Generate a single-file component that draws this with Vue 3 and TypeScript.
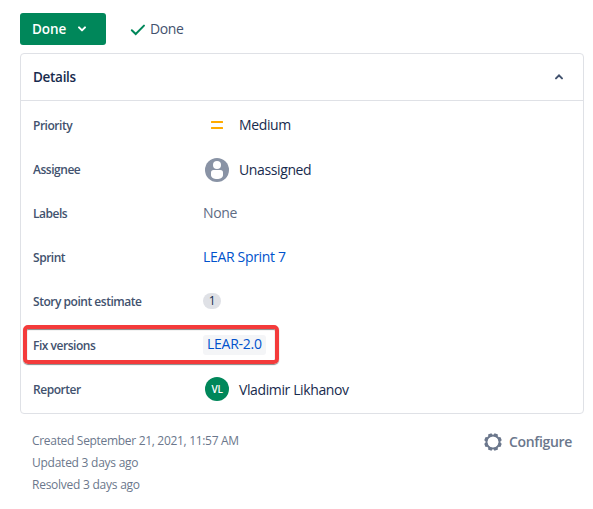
<script setup lang="ts">
interface Field {
  label: string
  value: string
  kind: 'priority' | 'unassigned' | 'none' | 'link' | 'badge' | 'version' | 'user'
}

const fields: Field[] = [
  { label: 'Priority', value: 'Medium', kind: 'priority' },
  { label: 'Assignee', value: 'Unassigned', kind: 'unassigned' },
  { label: 'Labels', value: 'None', kind: 'none' },
  { label: 'Sprint', value: 'LEAR Sprint 7', kind: 'link' },
  { label: 'Story point estimate', value: '1', kind: 'badge' },
  { label: 'Fix versions', value: 'LEAR-2.0', kind: 'version' },
  { label: 'Reporter', value: 'Vladimir Likhanov', kind: 'user' },
]
</script>

<template>
  <main class="panel">
    <div class="status">
      <button class="status-button" type="button">
        <span>Done</span>
        <svg width="10" height="8" viewBox="0 0 10 8"><path d="M2 2.4 5 5.4 8 2.4" /></svg>
      </button>
      <svg class="check" width="16" height="14" viewBox="0 0 16 14"><path d="M1.8 7.2 5.7 11 14 2.6" /></svg>
      <span class="resolution">Done</span>
    </div>

    <section class="card">
      <header class="card-header">
        <h2>Details</h2>
        <svg width="10" height="8" viewBox="0 0 10 8"><path d="M2 5.4 5 2.4 8 5.4" /></svg>
      </header>
      <div class="fields">
        <div v-for="field in fields" :key="field.label" class="field">
          <div class="label"><span>{{ field.label }}</span></div>
          <div class="value" :class="field.kind">
            <svg v-if="field.kind === 'priority'" class="icon" width="24" height="24" viewBox="0 0 24 24">
              <path d="M6.5 8h11a.5.5 0 0 1 .5.5v1a.5.5 0 0 1-.5.5h-11a.5.5 0 0 1-.5-.5v-1a.5.5 0 0 1 .5-.5zM6.5 14h11a.5.5 0 0 1 .5.5v1a.5.5 0 0 1-.5.5h-11a.5.5 0 0 1-.5-.5v-1a.5.5 0 0 1 .5-.5z" fill="#ffab00" />
            </svg>
            <svg v-if="field.kind === 'unassigned'" class="icon" width="24" height="24" viewBox="0 0 24 24">
              <circle cx="12" cy="12" r="12" fill="#8993a5" />
              <circle cx="12" cy="7" r="4" fill="#fff" />
              <path d="M6 14.5a2.5 2.5 0 0 1 2.5-2.5h7a2.5 2.5 0 0 1 2.5 2.5V17c0 2.6-2.8 4-6 4s-6-1.4-6-4z" fill="#fff" />
            </svg>
            <span v-if="field.kind === 'user'" class="icon avatar">VL</span>
            <span class="text">{{ field.value }}</span>
          </div>
          <div v-if="field.kind === 'version'" class="highlight"></div>
        </div>
      </div>
    </section>

    <footer class="footer">
      <div class="dates">
        <div class="created">Created September 21, 2021, 11:57 AM</div>
        <div>Updated 3 days ago</div>
        <div>Resolved 3 days ago</div>
      </div>
      <div class="configure">
        <svg width="20" height="20" viewBox="0 0 20 20">
          <circle cx="10" cy="10" r="6.6" />
          <g>
            <rect v-for="n in 8" :key="n" x="8" y="1.2" width="4" height="3.2" rx=".8" :transform="`rotate(${n * 45 + 22.5} 10 10)`" />
          </g>
        </svg>
        <span>Configure</span>
      </div>
    </footer>
  </main>
</template>

<style>
body {
  background: #fff;
}
</style>

<style scoped>
.panel {
  box-sizing: border-box;
  width: 593px;
  height: 509px;
  padding: 13px 9px 0 20px;
  font-family: "Open Sans", "Noto Sans", sans-serif;
  font-size: 14px;
  color: #172b4d;
}
.status {
  display: flex;
  align-items: center;
  height: 32px;
}
.status-button {
  display: flex;
  align-items: center;
  gap: 11px;
  box-sizing: border-box;
  width: 86px;
  height: 32px;
  padding: 0 0 0 12px;
  border: 0;
  border-radius: 3px;
  background: #00875a;
  color: #fff;
  font: inherit;
  font-size: 13.5px;
  font-weight: 600;
  letter-spacing: -0.1px;
}
.status-button svg {
  fill: none;
  stroke: #fff;
  stroke-width: 2;
  stroke-linecap: round;
  stroke-linejoin: round;
}
.check {
  margin: 2px 4px 0 24px;
  fill: none;
  stroke: #00875a;
  stroke-width: 2;
  stroke-linecap: round;
}
.resolution {
  padding-bottom: 1px;
  color: #42526e;
  letter-spacing: -0.4px;
}
.card {
  box-sizing: border-box;
  width: 564px;
  height: 361px;
  margin-top: 8px;
  border: 1px solid #dfe1e6;
  border-radius: 4px;
}
.card-header {
  display: flex;
  align-items: center;
  justify-content: space-between;
  height: 46px;
  padding: 0 19px 0 12px;
  border-bottom: 1px solid #dfe1e6;
}
.card-header h2 {
  margin: 0;
  font-size: 13.5px;
  font-weight: 600;
  letter-spacing: -0.3px;
}
.card-header svg {
  fill: none;
  stroke: #42526e;
  stroke-width: 2;
  stroke-linecap: round;
}
.fields {
  padding-top: 2px;
}
.field {
  position: relative;
  display: flex;
  align-items: center;
  height: 44px;
  padding-left: 12px;
}
.label {
  width: 170px;
  color: #42526e;
  font-size: 12px;
  font-weight: 600;
  letter-spacing: -0.47px;
}
.value {
  display: flex;
  align-items: center;
  letter-spacing: -0.38px;
  white-space: nowrap;
}
.icon {
  flex: none;
  margin: 0 10px 0 2px;
}
.unassigned {
  padding-top: 2px;
}
.unassigned .text {
  padding-bottom: 1px;
}
.priority .text,
.none .text,
.link .text {
  padding-bottom: 1px;
}
.none {
  color: #5e6c84;
}
.link,
.version {
  color: #0052cc;
}
.link {
  letter-spacing: -0.33px;
}
.badge .text {
  width: 18px;
  height: 16px;
  border-radius: 8px;
  background: #dfe1e6;
  font-size: 12px;
  line-height: 16px;
  text-align: center;
}
.version .text {
  box-sizing: border-box;
  width: 63px;
  height: 20px;
  padding-left: 4px;
  border-radius: 3px;
  background: #f4f5f7;
  line-height: 18px;
  letter-spacing: -0.25px;
}
.avatar {
  width: 24px;
  height: 24px;
  border-radius: 50%;
  background: #00875a;
  color: #fff;
  font-size: 10px;
  font-weight: 600;
  line-height: 24px;
  text-align: center;
}
.highlight {
  position: absolute;
  top: 2px;
  left: 2px;
  box-sizing: border-box;
  width: 256px;
  height: 39px;
  border: 4px solid #f43b3b;
  border-radius: 5px;
  box-shadow: 0 1px 1px #888, inset 0 1px 1px #888;
}
.footer {
  display: flex;
  justify-content: space-between;
  width: 552px;
  margin-left: 12px;
}
.dates {
  padding-top: 16px;
  color: #6b778c;
  font-size: 12px;
  line-height: 22px;
  letter-spacing: -0.25px;
}
.created {
  letter-spacing: -0.31px;
}
.configure {
  display: flex;
  align-items: center;
  gap: 6px;
  height: 20px;
  margin-top: 18px;
  padding-right: 12px;
  color: #6b778c;
  font-weight: 600;
  letter-spacing: -0.35px;
}
.configure span {
  padding-bottom: 1px;
}
.configure circle {
  fill: none;
  stroke: #6b778c;
  stroke-width: 2;
}
.configure rect {
  fill: #6b778c;
}
</style>
